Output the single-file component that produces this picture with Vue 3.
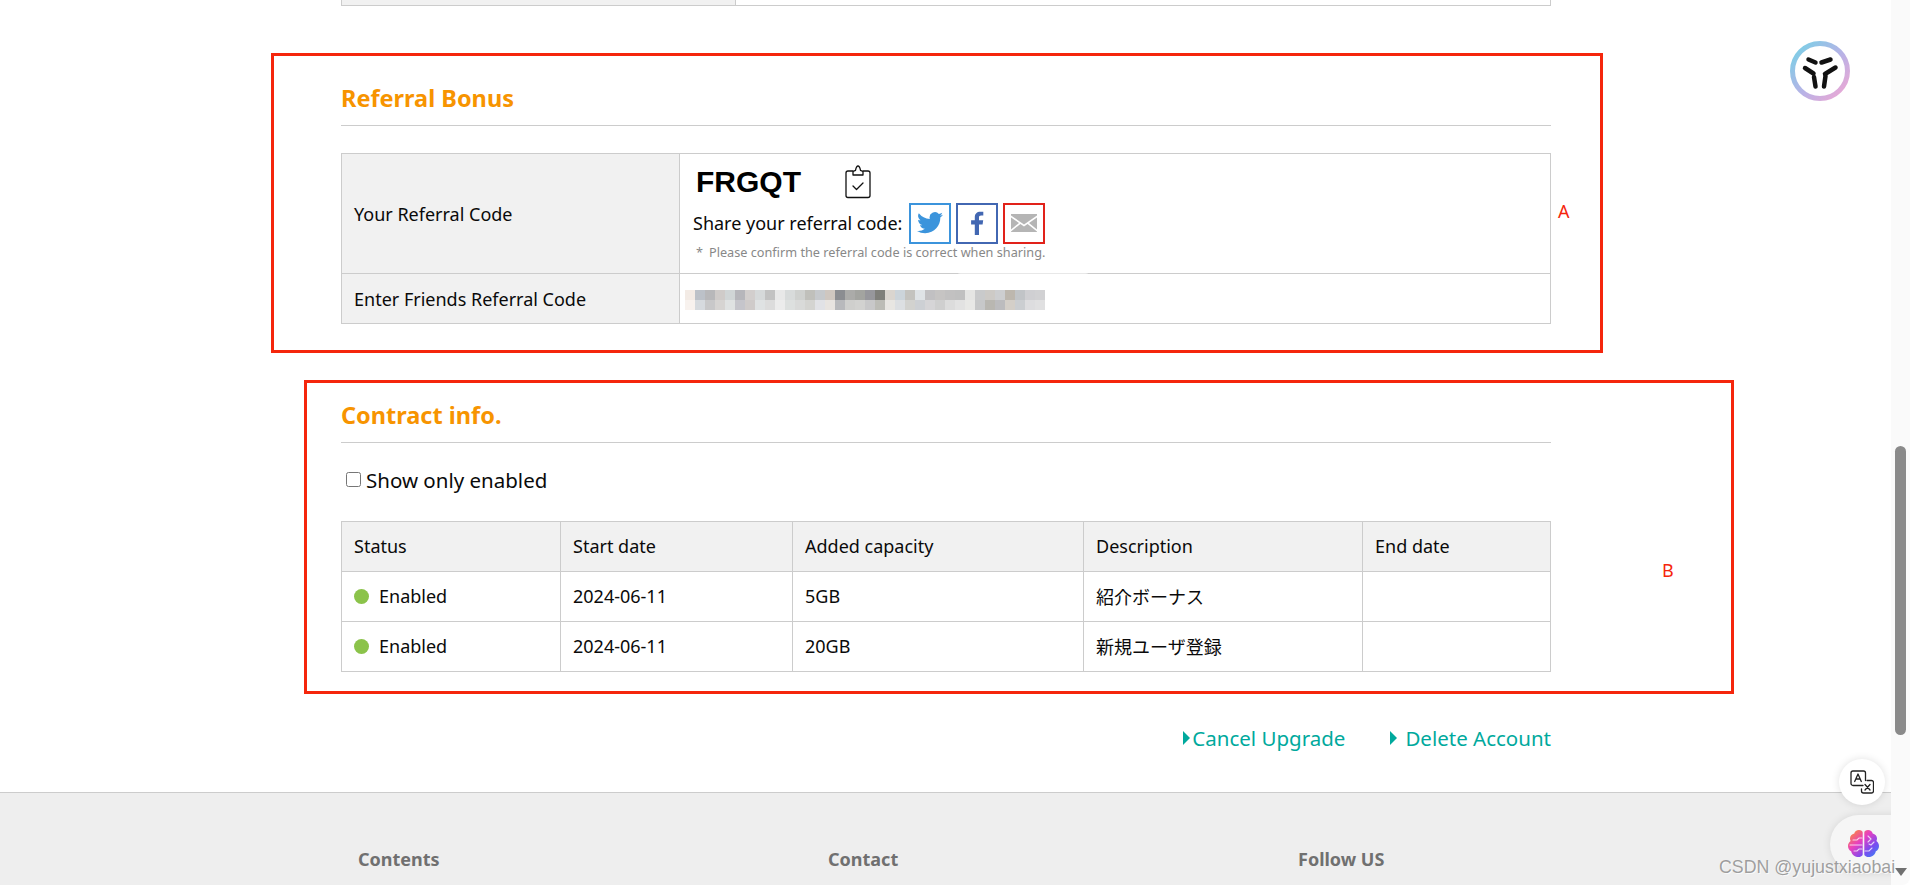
<script setup>
const mosaicTop = ['#f3ebe5','#bcc1c8','#b8b8ba','#cfcbc9','#d0d5d6','#b6b6bb','#d2cecd','#d6d9da','#c2c2c2','#e8e8e8','#d8dbdb','#cfd1cf','#c0c0bb','#c6c9cc','#cfc7c0','#8b8d91','#ababa9','#a3a4a0','#97979c','#7f7f7a','#dad5cf','#ccd4da','#c4c3bf','#dfe3e6','#c1c0c2','#c6c4c3','#c2c1c1','#c0c0c0','#e5e5e3','#c9cacb','#cdcac6','#cdced0','#bdb7ae','#c1c4c7','#cfcfd2','#d1d1d3']
const mosaicBottom = ['#f8f2ee','#d6dade','#c8c8c9','#d6d4d2','#dfe2e2','#c5c5cb','#cfcbca','#dfe2e3','#dcdcdc','#ececec','#dde0df','#d9dad9','#d4d4d1','#e1e2e6','#e8e4e0','#b8b9bc','#cfcfcd','#d2d2d0','#c8c8c9','#bcbcb6','#e8e6e2','#dcdfe2','#d2d2cf','#cdd0d4','#d6d5d7','#cfcfcf','#dcdcdc','#e2e2e2','#e8e8e6','#c7c8c9','#b9b7b1','#bcbcbe','#d4cfc8','#cbced1','#dddddf','#e0e0e1']
const contracts = [
  { start: '2024-06-11', cap: '5GB', desc: '紹介ボーナス' },
  { start: '2024-06-11', cap: '20GB', desc: '新規ユーザ登録' }
]
</script>

<template>
  <div class="page">
    <div class="viewport">
      <main class="main">
        <div class="top-table"><div class="tt-a"></div><div class="tt-b"></div></div>

        <section class="sec sec-a">
          <h2 class="heading">Referral Bonus</h2>
          <div class="ref-table">
            <div class="rt-label rt-first">Your Referral Code</div>
            <div class="rt-val rt-first">
              <div class="code-row">
                <span class="code">FRGQT</span>
                <svg class="clip" width="26" height="34" viewBox="0 0 26 34" fill="none" stroke="#111" stroke-width="1.3" stroke-linejoin="round" stroke-linecap="round">
                  <path d="M8 6H3a2 2 0 0 0-2 2v22.500a2 2 0 0 0 2 2h20a2 2 0 0 0 2-2V8a2 2 0 0 0-2-2h-5"/>
                  <path d="M8 10V6.500l2.500-1.200C11 2.800 11.800 1 13 1s2 1.800 2.500 4.300L18 6.500V10z"/>
                  <path d="M8 21l3.500 3.500L18 18"/>
                </svg>
              </div>
              <div class="share-row">
                <span class="share-text">Share your referral code:</span>
                <a class="sbtn tw">
                  <svg width="26" height="22" viewBox="0 0 24 20"><path fill="#3b94dc" d="M24 2.400a9.800 9.800 0 0 1-2.800.8A4.900 4.900 0 0 0 23.300.500a9.800 9.800 0 0 1-3.100 1.200A4.900 4.900 0 0 0 11.800 6.200 13.900 13.900 0 0 1 1.700.900a4.900 4.900 0 0 0 1.500 6.600 4.900 4.900 0 0 1-2.200-.6c0 2.400 1.700 4.500 3.900 4.900a4.900 4.900 0 0 1-2.200.1 4.900 4.900 0 0 0 4.600 3.400A9.900 9.900 0 0 1 0 17.300 13.900 13.900 0 0 0 7.500 19.500c9.100 0 14.300-7.700 14-14.600A10 10 0 0 0 24 2.400z"/></svg>
                </a>
                <a class="sbtn fb">
                  <svg width="14" height="24" viewBox="0 0 13 24"><path fill="#4267b2" d="M8.500 24V13.400h3.600l.6-4.200H8.500V6.600c0-1.200.4-2 2.100-2h2.200V.8C12.400.8 11.100.700 9.700.700 6.500.700 4.300 2.600 4.300 6.100v3.100H.6v4.200h3.700V24z"/></svg>
                </a>
                <a class="sbtn em">
                  <svg width="26" height="18" viewBox="0 0 26 18"><path fill="#b5b5b5" d="M0 1.500 13 10.500 26 1.500V0H0zM0 3.600V15.500L8 8.900zM26 3.600V15.500L18 8.900zM9.400 9.900 0 17.500V18H26V17.500L16.600 9.900 13 12.400z"/></svg>
                </a>
              </div>
              <p class="note"><span class="star">*</span>Please confirm the referral code is correct when sharing.</p>
            </div>
            <div class="rt-label rt-last">Enter Friends Referral Code</div>
            <div class="rt-val rt-last">
              <span class="smear"></span>
              <div class="mosaic">
                <i v-for="(c, i) in mosaicTop" :key="'t' + i" :style="{ background: c }"></i>
                <i v-for="(c, i) in mosaicBottom" :key="'b' + i" :style="{ background: c }"></i>
              </div>
            </div>
          </div>
        </section>

        <section class="sec sec-b">
          <h2 class="heading">Contract info.</h2>
          <label class="check"><input type="checkbox" />Show only enabled</label>
          <div class="c-table">
            <div class="c-row c-head">
              <div>Status</div><div>Start date</div><div>Added capacity</div><div>Description</div><div>End date</div>
            </div>
            <div class="c-row" v-for="(c, i) in contracts" :key="i">
              <div class="status"><span class="dot"></span>Enabled</div>
              <div>{{ c.start }}</div>
              <div>{{ c.cap }}</div>
              <div class="cjk">{{ c.desc }}</div>
              <div></div>
            </div>
          </div>
          <div class="links">
            <a class="link"><span class="tri"></span>Cancel Upgrade</a>
            <a class="link del"><span class="tri"></span>Delete Account</a>
          </div>
        </section>

        <footer class="footer">
          <div class="f-col">Contents</div>
          <div class="f-col">Contact</div>
          <div class="f-col">Follow US</div>
        </footer>
      </main>

      <div class="mark box-a"><span class="tag tag-a">A</span></div>
      <div class="mark box-b"><span class="tag tag-b">B</span></div>

      <svg class="logo" width="60" height="60" viewBox="0 0 60 60" fill="none">
        <defs>
          <linearGradient id="ring" x1="0" y1="0" x2="1" y2="1">
            <stop offset="0" stop-color="#74d2e6"/>
            <stop offset=".55" stop-color="#b9b2e6"/>
            <stop offset="1" stop-color="#f2a6d2"/>
          </linearGradient>
        </defs>
        <circle cx="30" cy="30" r="27.500" stroke="url(#ring)" stroke-width="5"/>
        <g stroke="#111" stroke-width="4.500" stroke-linecap="round">
          <path d="M18.500 18.500 25.500 21.500"/><path d="M31.500 21.500 40.500 18.500"/>
          <path d="M15 27 23.500 32.500"/><path d="M45.500 26.500 35 33"/>
          <path d="M24 36 25.500 45.500"/><path d="M35.500 35 34 45.500"/>
        </g>
      </svg>

      <div class="fab fab-tr">
        <svg width="24" height="24" viewBox="0 0 24 24" fill="none" stroke="#222" stroke-width="1.300" stroke-linejoin="round" stroke-linecap="round">
          <path d="M13 15.500H3a2 2 0 0 1-2-2V3a2 2 0 0 1 2-2h10.500a2 2 0 0 1 2 2v7.500"/>
          <path d="M4.700 11.500 8 4l3.300 7.500M6 9h4"/>
          <path d="M17 10.500h4.500a2 2 0 0 1 2 2V21a2 2 0 0 1-2 2h-8a2 2 0 0 1-2-2v-2"/>
          <path d="M15 14.500l5 5.500M20 14.500l-5 5.500"/>
        </svg>
      </div>
      <div class="fab-brain">
        <svg width="31" height="28" viewBox="0 0 31 28" fill="none">
          <defs>
            <linearGradient id="br" x1="0" y1="0" x2="1" y2="1">
              <stop offset="0" stop-color="#ff9a1f"/>
              <stop offset=".4" stop-color="#e83fc0"/>
              <stop offset=".7" stop-color="#7a4cf0"/>
              <stop offset="1" stop-color="#2f8cf5"/>
            </linearGradient>
          </defs>
          <path fill="url(#br)" d="M14.700 2.500C14.700 1 13 0 11 0 8.500 0 6.800 1.500 6.300 3.500 3.800 4 2 6 2 8.500c0 1 .2 1.800.6 2.500C1 12 0 14 0 16c0 2.400 1.300 4.300 3.200 5.300.4 3 3 5.300 6 5.700 2.500.3 5.500-.7 5.500-2.500zM16.300 2.500C16.300 1 18 0 20 0c2.500 0 4.200 1.500 4.700 3.500C27.200 4 29 6 29 8.500c0 1-.2 1.800-.6 2.500 1.600 1 2.600 3 2.600 5 0 2.400-1.300 4.300-3.200 5.300-.4 3-3 5.300-6 5.700-2.500.3-5.500-.7-5.500-2.500z"/>
          <g stroke="#fff" stroke-opacity=".75" stroke-width="1.100" stroke-linecap="round">
            <path d="M5 10h4l2-2h3M2 15h12M6 21h3l2-2h3"/>
            <path d="M20 6l3 3-3 3M26 12l-3 3-2-1M17 21h4l3-3"/>
          </g>
        </svg>
      </div>
    </div>

    <aside class="scrollbar">
      <span class="thumb"></span>
      <span class="arrow"></span>
    </aside>

    <div class="watermark">CSDN @yujustxiaobai</div>
  </div>
</template>

<style>
html, body { margin: 0; height: 885px; overflow: hidden; background: #fff; }
</style>

<style scoped>
.page {
  display: flex;
  width: 1910px;
  height: 885px;
  overflow: hidden;
  position: relative;
  font-family: "Noto Sans", "Open Sans", "Noto Sans CJK JP", sans-serif;
  color: #0a0a0a;
  font-size: 18px;
}
.viewport { flex: 1; position: relative; overflow: hidden; }
.main { display: flex; flex-direction: column; height: 885px; }

.top-table {
  margin: 0 340px 0 341px;
  height: 5px;
  display: flex;
  border: 1px solid #ccc;
  border-top: 0;
}
.tt-a { width: 393px; background: #f1f1f1; border-right: 1px solid #ccc; }
.tt-b { flex: 1; }

.sec { margin: 0 340px 0 341px; }
.heading {
  margin: 0;
  padding-bottom: 10px;
  border-bottom: 1px solid #ccc;
  color: #f79400;
  font-size: 23.500px;
  font-weight: 700;
  line-height: 33px;
}
.sec-a { padding-top: 76px; }

.ref-table {
  margin-top: 27px;
  display: grid;
  grid-template-columns: 338px 1fr;
  grid-template-rows: 120px 49px;
  border: 1px solid #ccc;
  box-sizing: border-box;
  height: 171px;
}
.rt-label {
  background: #f1f1f1;
  border-right: 1px solid #ccc;
  display: flex;
  align-items: center;
  padding-left: 12px;
}
.rt-first { border-bottom: 1px solid #ccc; }
.rt-val { padding-left: 13px; position: relative; }
.code-row { display: flex; align-items: center; height: 49px; padding: 7px 0 0 3px; box-sizing: border-box; }
.code {
  font-family: "Liberation Sans", Arial, sans-serif;
  font-weight: 700;
  font-size: 30px;
  width: 149px;
  color: #000;
}
.share-row { display: flex; align-items: center; height: 40px; }
.share-text { width: 216px; white-space: nowrap; }
.sbtn {
  box-sizing: border-box;
  width: 42px;
  height: 41px;
  margin-right: 5px;
  border: 2px solid;
  display: flex;
  align-items: center;
  justify-content: center;
}
.tw { border-color: #3b94dc; }
.fb { border-color: #4267b2; }
.em { border-color: #e1221a; }
.note { margin: 1px 0 0 3px; font-size: 12.700px; line-height: 16px; color: #888; white-space: nowrap; }
.star { display: inline-block; width: 13px; }
.rt-val.rt-last { display: flex; align-items: center; padding-left: 0; }
.smear {
  position: absolute;
  left: 278px; top: -3px;
  width: 130px; height: 6px;
  border-radius: 50%;
  background: rgba(255,255,255,.55);
}
.mosaic {
  display: grid;
  grid-template-columns: repeat(36, 10px);
  grid-auto-rows: 10px;
  margin: 3px 0 0 5px;
}
.mosaic i { display: block; }

.sec-b { padding-top: 75px; }
.check {
  display: flex;
  align-items: center;
  height: 30px;
  margin-top: 22px;
  padding-left: 5px;
  font-size: 20.500px;
}
.check input { width: 15px; height: 15px; margin: 0 5px 2px 0; }
.c-table {
  margin-top: 26px;
  border: 1px solid #ccc;
  border-bottom: 0;
}
.c-row {
  display: grid;
  grid-template-columns: 219px 232px 291px 279px 1fr;
  height: 50px;
  box-sizing: border-box;
  border-bottom: 1px solid #ccc;
}
.c-row > div {
  display: flex;
  align-items: center;
  padding: 0 0 2px 12px;
  border-right: 1px solid #ccc;
}
.c-row > div:last-child { border-right: 0; }
.c-head { background: #f1f1f1; }
.dot { width: 15px; height: 15px; border-radius: 50%; background: #8bc34a; margin: 2px 10px 0 0; }
.cjk { font-family: "Noto Sans CJK JP", sans-serif; }

.links {
  display: flex;
  justify-content: flex-end;
  gap: 45px;
  margin-top: 51px;
  height: 30px;
  align-items: center;
}
.link { color: #00a99d; font-size: 20.500px; display: flex; align-items: center; white-space: nowrap; }
.tri {
  width: 0; height: 0;
  border-left: 7px solid #00a99d;
  border-top: 7px solid transparent;
  border-bottom: 7px solid transparent;
  margin-right: 2px;
}
.del .tri { margin-right: 8px; }

.footer {
  margin-top: 39px;
  flex: 1;
  background: #eee;
  border-top: 1px solid #ccc;
  display: flex;
  padding: 54px 0 0 358px;
  color: #707070;
  font-size: 18px;
  font-weight: 700;
}
.f-col { width: 470px; }

.mark { position: absolute; border: 3px solid #f5260c; box-sizing: border-box; pointer-events: none; }
.box-a { left: 271px; top: 53px; width: 1332px; height: 300px; }
.box-b { left: 304px; top: 380px; width: 1430px; height: 314px; }
.tag { position: absolute; color: #f5260c; font-family: "Noto Sans", sans-serif; font-size: 18px; }
.tag-a { left: 1284px; top: 143px; }
.tag-b { left: 1355px; top: 175px; }

.logo { position: absolute; left: 1790px; top: 41px; }

.fab {
  position: absolute;
  left: 1839px; top: 759px;
  width: 46px; height: 46px;
  border-radius: 50%;
  background: #fff;
  box-shadow: 0 0 8px rgba(0,0,0,.12);
  display: flex; align-items: center; justify-content: center;
}
.fab-brain {
  position: absolute;
  left: 1830px; top: 815px;
  width: 90px; height: 58px;
  border-radius: 29px 0 0 29px;
  background: #f6f6f6;
  box-shadow: 0 0 8px rgba(0,0,0,.1);
  display: flex; align-items: center;
  padding-left: 18px;
  box-sizing: border-box;
}

.scrollbar {
  width: 19px;
  position: relative;
  background: #fafafa;
  border-bottom-right-radius: 8px;
}
.thumb { position: absolute; left: 4px; width: 11px; top: 446px; height: 289px; background: #8a8a8a; border-radius: 6px; }
.arrow {
  position: absolute; left: 4px; top: 868px;
  width: 0; height: 0;
  border-top: 8px solid #707070;
  border-left: 6px solid transparent;
  border-right: 6px solid transparent;
}

.watermark {
  position: absolute;
  left: 1719px; top: 857px;
  font-family: "Liberation Sans", Arial, sans-serif;
  font-size: 17.800px;
  color: rgba(120,120,120,.7);
  text-shadow: 1px 1px 0 rgba(255,255,255,.7);
  white-space: nowrap;
}
</style>
